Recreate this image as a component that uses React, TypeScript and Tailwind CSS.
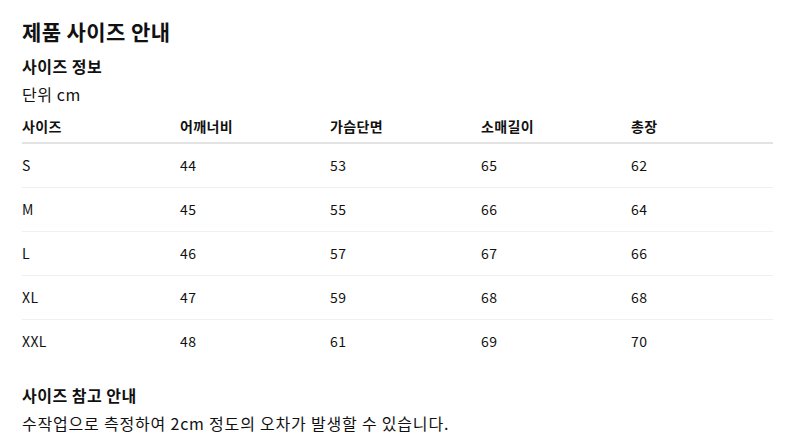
import React from 'react';

const rows = [
  ['S', '44', '53', '65', '62'],
  ['M', '45', '55', '66', '64'],
  ['L', '46', '57', '67', '66'],
  ['XL', '47', '59', '68', '68'],
  ['XXL', '48', '61', '69', '70'],
];

const headers = ['사이즈', '어깨너비', '가슴단면', '소매길이', '총장'];
const colWidths = ['w-[158px]', 'w-[150px]', 'w-[151px]', 'w-[150px]', ''];

export default function App() {
  return (
    <div
      className="w-[800px] h-[448px] bg-white text-[#111] pl-[22px] pr-[27px] pt-[18px]"
      style={{ fontFamily: '"Noto Sans CJK KR", "Noto Sans", sans-serif' }}
    >
      <h1 className="text-[21px] tracking-[0.4px] font-bold leading-[28px] -mt-[1px]">제품 사이즈 안내</h1>
      <h2 className="text-[16px] tracking-[0.5px] font-bold leading-[22px] mt-[10px]">사이즈 정보</h2>
      <p className="text-[16px] tracking-[0.6px] leading-[22px] mt-[6px]">단위 cm</p>

      <table className="w-full mt-[10px] border-collapse text-[14px] tracking-[0.4px]">
        <thead>
          <tr className="border-b-2 border-[#e3e3e3]">
            {headers.map((h, i) => (
              <th key={h} className={`${colWidths[i]} text-left font-bold h-[28px] pb-[5px] align-middle`}>
                {h}
              </th>
            ))}
          </tr>
        </thead>
        <tbody>
          {rows.map((r) => (
            <tr key={r[0]} className="border-b border-[#f0f0f0] last:border-b-0">
              {r.map((c, i) => (
                <td key={i} className="h-[44px] align-middle pt-[1px]">
                  {c}
                </td>
              ))}
            </tr>
          ))}
        </tbody>
      </table>

      <h2 className="text-[16px] tracking-[0.5px] font-bold leading-[22px] mt-[21px]">사이즈 참고 안내</h2>
      <p className="text-[16px] tracking-[0.8px] leading-[22px] mt-[6px]">
        수작업으로 측정하여 2cm 정도의 오차가 발생할 수 있습니다.
      </p>
    </div>
  );
}
